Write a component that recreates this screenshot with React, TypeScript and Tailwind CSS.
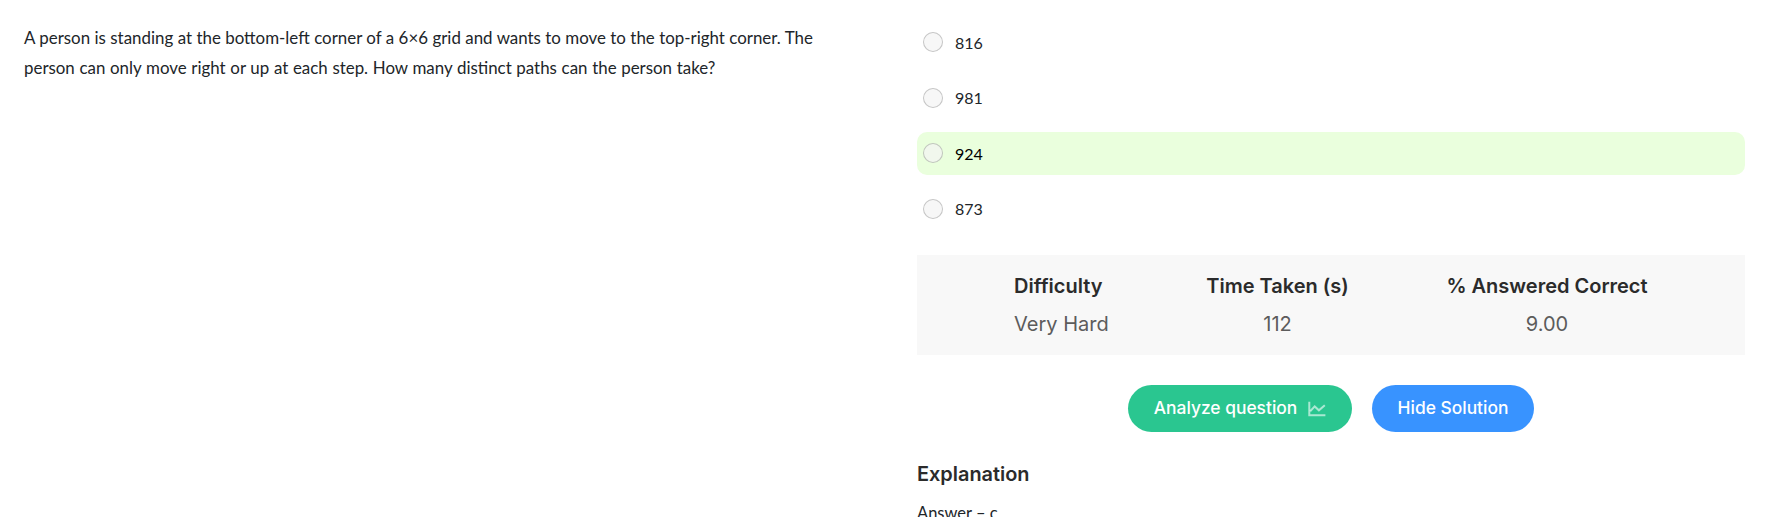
const options = [
  { value: '816', row: 'mb-[13px]', text: '' },
  { value: '981', row: 'mb-3', text: 'pb-0.5' },
  { value: '924', row: 'mb-[13px] bg-[#eaffdd] text-black', text: '' },
  { value: '873', row: '', text: 'pb-0.5' },
];

const stats = [
  { label: 'Difficulty', value: 'Very Hard', box: 'ml-[97px] w-[95px] text-left' },
  { label: 'Time Taken (s)', value: '112', box: 'ml-[97px] w-[143px] text-center' },
  { label: '% Answered Correct', value: '9.00', box: 'ml-24 w-[204px] text-center' },
];

function ChartIcon() {
  return (
    <svg className="ml-[11px] h-4 w-[18px] shrink-0" viewBox="0 0 18 16" fill="none" stroke="#fff" strokeOpacity="0.6" strokeWidth="2">
      <path d="M1.3 0.8V14.2H17.4" />
      <path d="M2.2 10.2L6.7 5.4L10.9 9.3L16.8 4.2" />
    </svg>
  );
}

export default function App() {
  return (
    <main className="flex h-[517px] w-full overflow-hidden bg-white font-['Lato',sans-serif] text-[16.9px] text-[#212529]">
      <section className="w-[917px] shrink-0 pt-[23px] pl-6">
        <p className="w-[800px] leading-[30px]">
          <span className="[word-spacing:0.1px]">
            A person is standing at the bottom-left corner of a 6×6 grid and wants to move to the top-right corner. The{' '}
          </span>
          <span className="[word-spacing:0.35px]">
            person can only move right or up at each step. How many distinct paths can the person take?
          </span>
        </p>
      </section>
      <section className="w-[828px] shrink-0 pt-[21px]">
        <div className="text-[16px]">
          {options.map((o) => (
            <div key={o.value} className={`flex h-[43px] items-center rounded-[10px] pl-1.5 ${o.row}`}>
              <span className="mr-3 -mt-px size-5 rounded-full border border-black/20 bg-[#f3f3f3]/70" />
              <span className={o.text}>{o.value}</span>
            </div>
          ))}
        </div>
        <div className="mt-6 flex h-[100px] bg-[#f8f8f8] pt-3 font-['Inter',sans-serif] text-[20px] leading-[38px] whitespace-nowrap">
          {stats.map((s) => (
            <div key={s.label} className={s.box}>
              <div className="font-semibold text-[#2b2b2b]">{s.label}</div>
              <div className="text-[#5c5c5c]">{s.value}</div>
            </div>
          ))}
        </div>
        <div className="mt-[30px] flex gap-5 pl-[211px] font-['Inter',sans-serif] text-[17.4px] font-medium text-white">
          <button className="flex h-[47px] w-[224px] items-center justify-center rounded-full bg-[#2ac690] whitespace-nowrap">
            Analyze question
            <ChartIcon />
          </button>
          <button className="h-[47px] w-[162px] rounded-full bg-[#3893ff] whitespace-nowrap">Hide Solution</button>
        </div>
        <h2 className="mt-[27px] font-['Inter',sans-serif] text-[19.9px] leading-[30px] font-semibold text-[#2b2b2b]">Explanation</h2>
        <p className="mt-[9px] text-[16.5px] leading-[30px] whitespace-nowrap">Answer – c</p>
      </section>
    </main>
  );
}
